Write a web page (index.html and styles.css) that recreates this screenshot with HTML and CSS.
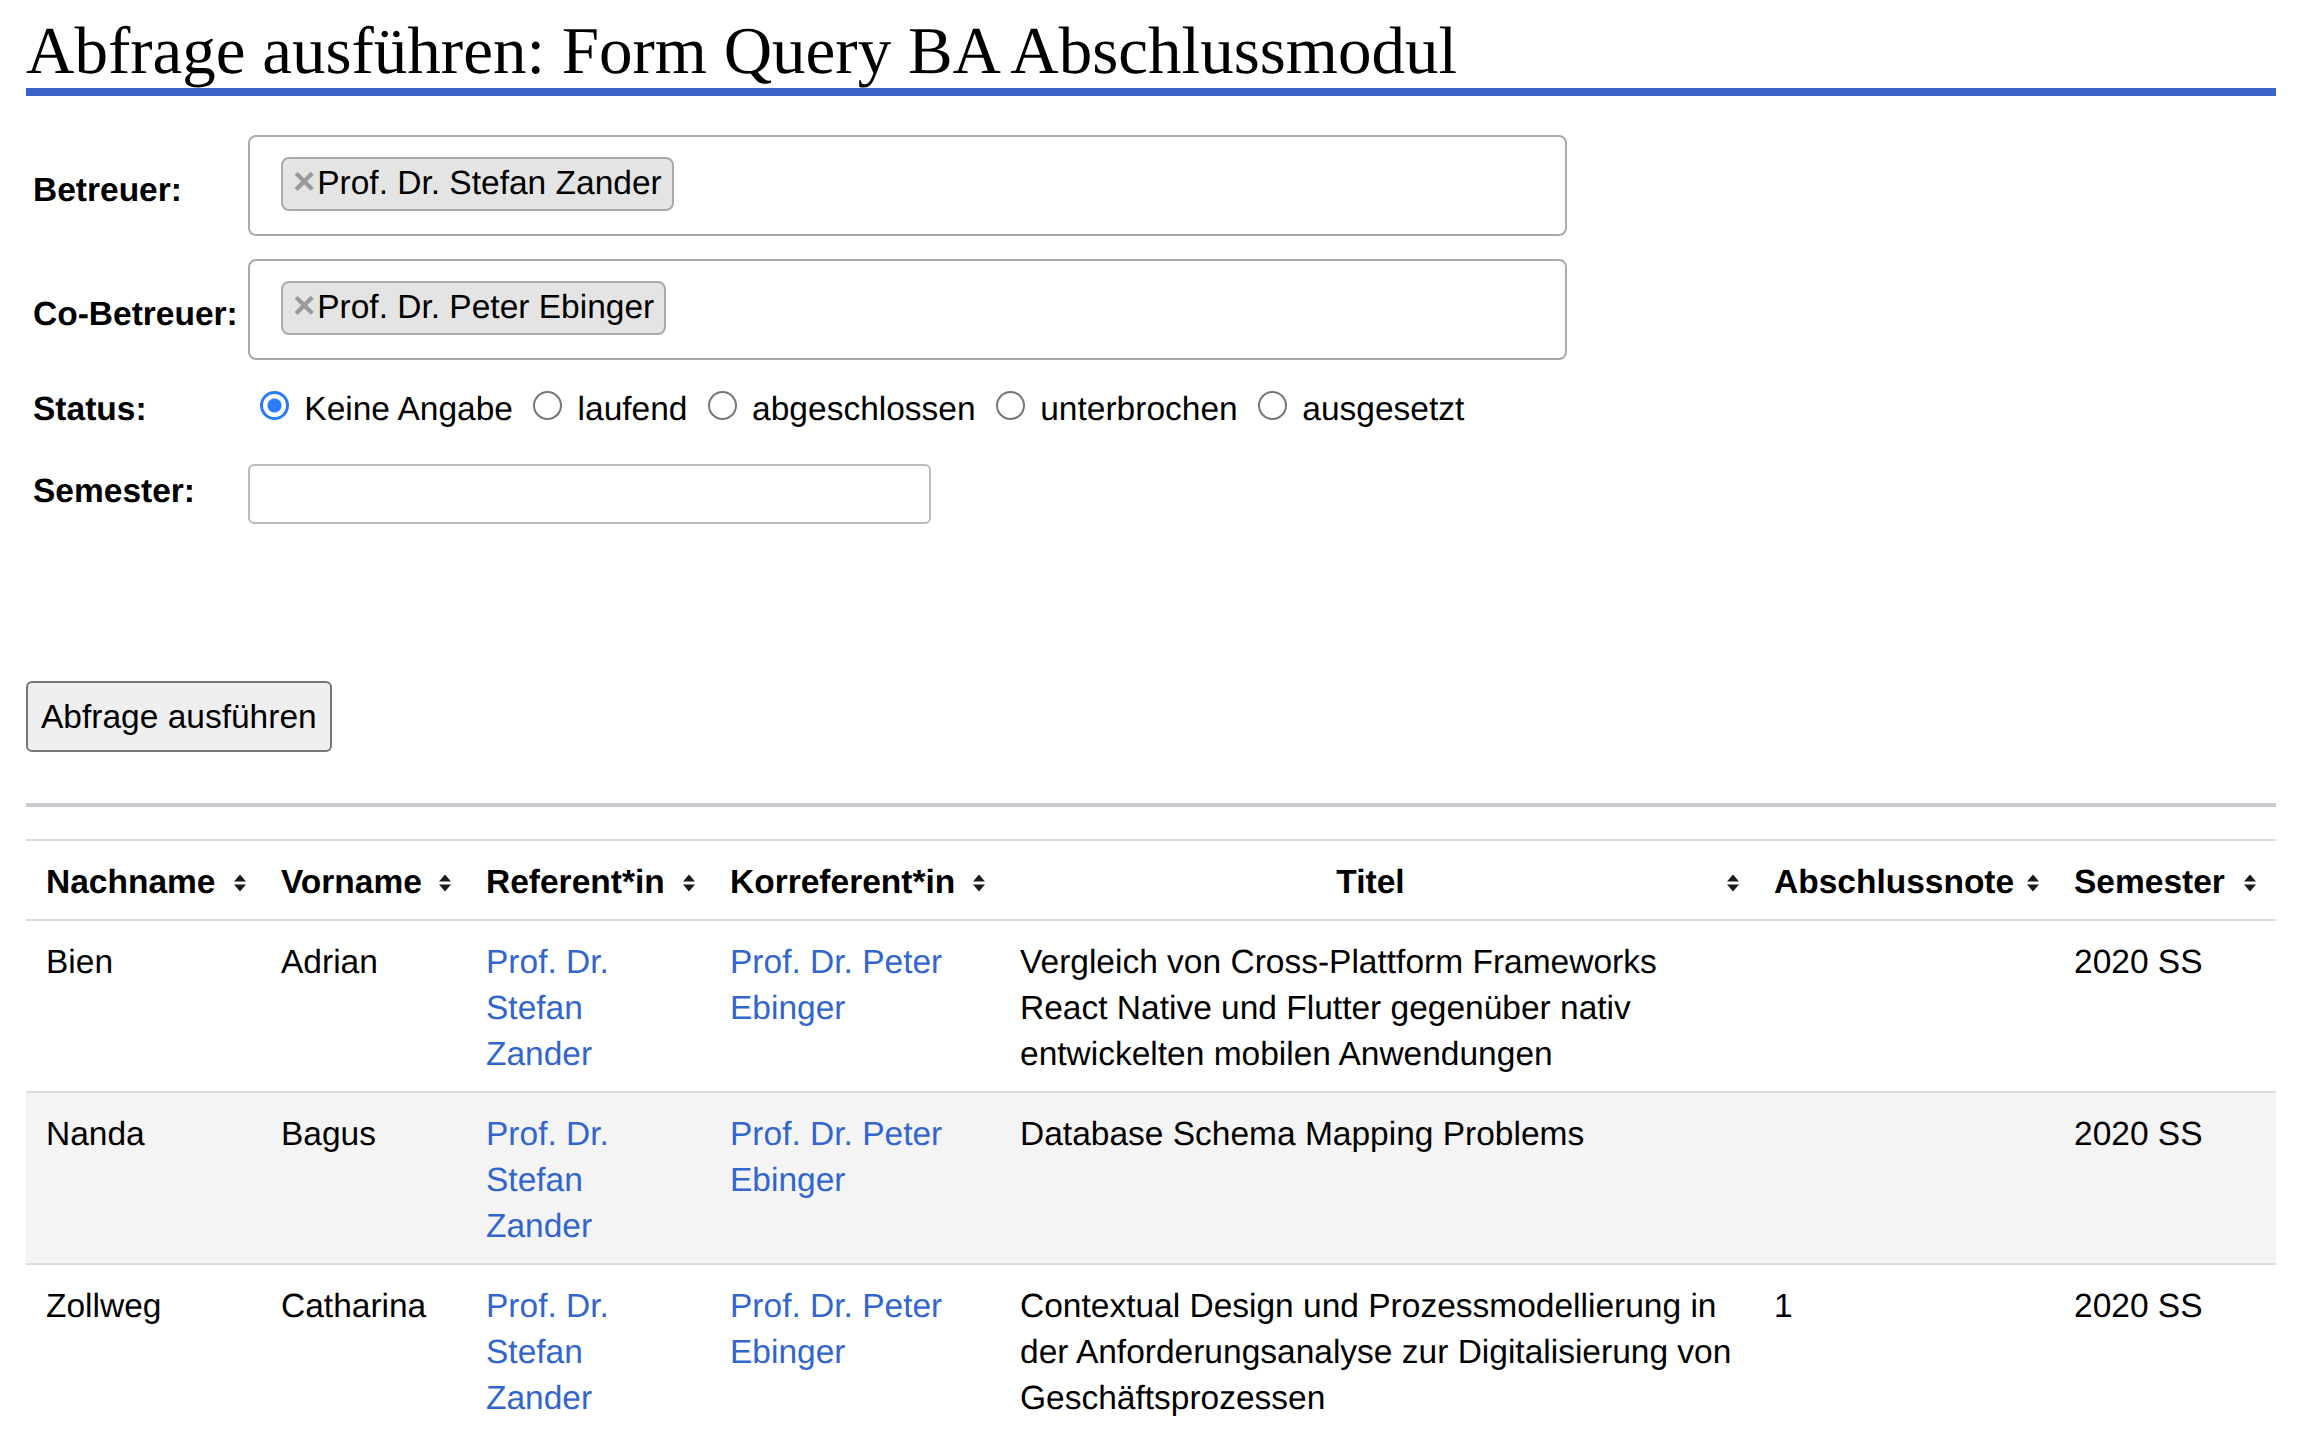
FILE: index.html
```html
<!DOCTYPE html>
<html lang="de">
<head>
<meta charset="utf-8">
<title>Abfrage ausführen: Form Query BA Abschlussmodul</title>
<link rel="stylesheet" href="styles.css">
</head>
<body>
<div class="page">
  <h1 class="page-title">Abfrage ausführen: Form Query BA Abschlussmodul</h1>

  <form class="query-form">
    <div class="form-row select-row">
      <span class="form-label">Betreuer:</span>
      <div class="select-box"><span class="chip"><span class="chip-remove">×</span>Prof. Dr. Stefan Zander</span></div>
    </div>
    <div class="form-row select-row row-gap">
      <span class="form-label">Co-Betreuer:</span>
      <div class="select-box"><span class="chip"><span class="chip-remove">×</span>Prof. Dr. Peter Ebinger</span></div>
    </div>
    <div class="form-row status-row">
      <span class="form-label">Status:</span>
      <div class="radio-group"><input class="radio first" type="radio" name="status" id="s0" checked> <label for="s0">Keine Angabe</label> <input class="radio" type="radio" name="status" id="s1"> <label for="s1">laufend</label> <input class="radio" type="radio" name="status" id="s2"> <label for="s2">abgeschlossen</label> <input class="radio" type="radio" name="status" id="s3"> <label for="s3">unterbrochen</label> <input class="radio" type="radio" name="status" id="s4"> <label for="s4">ausgesetzt</label></div>
    </div>
    <div class="form-row semester-row">
      <label class="form-label" for="sem">Semester:</label>
      <input class="text-input" type="text" id="sem">
    </div>
    <div class="button-row">
      <button type="button" class="run-button">Abfrage ausführen</button>
    </div>
  </form>

  <hr class="separator">

  <table class="results">
    <colgroup>
      <col class="c-nach"><col class="c-vor"><col class="c-ref"><col class="c-kor"><col class="c-titel"><col class="c-note"><col class="c-sem">
    </colgroup>
    <thead>
      <tr>
        <th><div class="th-inner"><span class="th-label">Nachname</span><svg class="sort-icon" viewBox="0 0 12 20"><path d="M0 8.5 L6 1.5 L12 8.5 Z M0 11.5 L12 11.5 L6 18.5 Z"/></svg></div></th>
        <th><div class="th-inner"><span class="th-label">Vorname</span><svg class="sort-icon" viewBox="0 0 12 20"><path d="M0 8.5 L6 1.5 L12 8.5 Z M0 11.5 L12 11.5 L6 18.5 Z"/></svg></div></th>
        <th><div class="th-inner"><span class="th-label">Referent*in</span><svg class="sort-icon" viewBox="0 0 12 20"><path d="M0 8.5 L6 1.5 L12 8.5 Z M0 11.5 L12 11.5 L6 18.5 Z"/></svg></div></th>
        <th><div class="th-inner"><span class="th-label">Korreferent*in</span><svg class="sort-icon" viewBox="0 0 12 20"><path d="M0 8.5 L6 1.5 L12 8.5 Z M0 11.5 L12 11.5 L6 18.5 Z"/></svg></div></th>
        <th><div class="th-inner"><span class="th-label centered">Titel</span><svg class="sort-icon" viewBox="0 0 12 20"><path d="M0 8.5 L6 1.5 L12 8.5 Z M0 11.5 L12 11.5 L6 18.5 Z"/></svg></div></th>
        <th><div class="th-inner"><span class="th-label">Abschlussnote</span><svg class="sort-icon" viewBox="0 0 12 20"><path d="M0 8.5 L6 1.5 L12 8.5 Z M0 11.5 L12 11.5 L6 18.5 Z"/></svg></div></th>
        <th class="last"><div class="th-inner"><span class="th-label">Semester</span><svg class="sort-icon" viewBox="0 0 12 20"><path d="M0 8.5 L6 1.5 L12 8.5 Z M0 11.5 L12 11.5 L6 18.5 Z"/></svg></div></th>
      </tr>
    </thead>
    <tbody>
      <tr>
        <td>Bien</td>
        <td>Adrian</td>
        <td><a href="#">Prof. Dr. Stefan Zander</a></td>
        <td><a href="#">Prof. Dr. Peter Ebinger</a></td>
        <td class="titel">Vergleich von Cross-Plattform Frameworks React Native und Flutter gegenüber nativ entwickelten mobilen Anwendungen</td>
        <td></td>
        <td>2020 SS</td>
      </tr>
      <tr class="alt">
        <td>Nanda</td>
        <td>Bagus</td>
        <td><a href="#">Prof. Dr. Stefan Zander</a></td>
        <td><a href="#">Prof. Dr. Peter Ebinger</a></td>
        <td class="titel">Database Schema Mapping Problems</td>
        <td></td>
        <td>2020 SS</td>
      </tr>
      <tr>
        <td>Zollweg</td>
        <td>Catharina</td>
        <td><a href="#">Prof. Dr. Stefan Zander</a></td>
        <td><a href="#">Prof. Dr. Peter Ebinger</a></td>
        <td class="titel">Contextual Design und Prozessmodellierung in der Anforderungsanalyse zur Digitalisierung von Geschäftsprozessen</td>
        <td>1</td>
        <td>2020 SS</td>
      </tr>
    </tbody>
  </table>
</div>
</body>
</html>
```

FILE: styles.css
```css
html, body {
  margin: 0;
  padding: 0;
  background: #fff;
}

body {
  font-family: "Liberation Sans", Arial, Helvetica, sans-serif;
  font-size: 33.5px;
  color: #000;
  text-rendering: geometricPrecision;
}

.page {
  padding: 0 28px 0 26px;
}

.page-title {
  font-family: "Liberation Serif", "Times New Roman", serif;
  font-size: 67px;
  font-weight: normal;
  line-height: 74px;
  margin: 0;
  padding: 14px 0 0 0;
  border-bottom: 8px solid #3a65c7;
}

/* ---------- form ---------- */
.query-form {
  margin-top: 39px;
}

.form-row {
  display: flex;
  align-items: baseline;
}

.select-row {
  align-items: flex-start;
}

.select-row .form-label {
  padding-top: 37px;
}

.row-gap {
  margin-top: 23px;
}

.form-label {
  box-sizing: border-box;
  width: 222px;
  flex: none;
  padding-left: 7px;
  font-weight: bold;
}

.select-box {
  box-sizing: border-box;
  width: 1319px;
  height: 101px;
  border: 2px solid #aaa;
  border-radius: 8px;
  padding: 20px 0 0 31px;
  background: #fff;
}

.chip {
  display: inline-block;
  box-sizing: border-box;
  height: 54px;
  padding: 6px 10px 0 10px;
  line-height: 37px;
  border: 2px solid #aaa;
  border-radius: 8px;
  background: #e4e4e4;
  white-space: nowrap;
  vertical-align: top;
}

.chip-remove {
  color: #999;
  font-weight: bold;
  font-size: 38px;
  line-height: 30px;
  margin-right: 2px;
}

.status-row {
  margin-top: 31px;
}

.radio-group {
  white-space: nowrap;
}

.radio {
  appearance: none;
  -webkit-appearance: none;
  box-sizing: border-box;
  display: inline-block;
  width: 29px;
  height: 29px;
  margin: 0 6px 0 11px;
  border: 2px solid #767676;
  border-radius: 50%;
  background: #fff;
  vertical-align: baseline;
}

.radio.first {
  margin-left: 12px;
}

.radio:checked {
  border: 3px solid #2a7bf5;
  background: radial-gradient(circle, #2a7bf5 0, #2a7bf5 6.5px, #fff 7.5px, #fff 100%);
}

.semester-row {
  margin-top: 35px;
  align-items: flex-start;
}

.semester-row .form-label {
  padding-top: 9px;
}

.text-input {
  box-sizing: border-box;
  width: 683px;
  height: 60px;
  border: 2px solid #bbb;
  border-radius: 6px;
  font: inherit;
  padding: 0 10px;
  margin: 0;
  background: #fff;
}

.button-row {
  margin-top: 157px;
}

.run-button {
  box-sizing: border-box;
  height: 71px;
  padding: 0 13px;
  margin: 0;
  font: inherit;
  color: #000;
  background: #efefef;
  border: 2px solid #767676;
  border-radius: 6px;
}

.separator {
  border: none;
  height: 4px;
  background: #c8ccd1;
  margin: 51px 0 32px 0;
}

/* ---------- results table ---------- */
.results {
  width: 2250px;
  table-layout: fixed;
  border-collapse: collapse;
}

.c-nach { width: 235px; }
.c-vor { width: 205px; }
.c-ref { width: 244px; }
.c-kor { width: 290px; }
.c-titel { width: 754px; }
.c-note { width: 300px; }
.c-sem { width: 222px; }

.results th,
.results td {
  padding: 19px 20px 13px 20px;
  line-height: 46px;
  border-top: 2px solid #ddd;
  text-align: left;
  vertical-align: top;
}

.results td.titel {
  padding-right: 12px;
}

.results th {
  font-weight: bold;
  border-bottom: 2px solid #ddd;
  padding-right: 15px;
}

.results th.last {
  padding-right: 20px;
}

.th-inner {
  display: flex;
  align-items: center;
  gap: 6px;
}

.th-label {
  flex: 1;
  white-space: nowrap;
}

.th-label.centered {
  text-align: center;
}

.sort-icon {
  flex: none;
  width: 12px;
  height: 20px;
  fill: #1a1a1a;
}

.results tr.alt td {
  background: #f4f4f4;
}

.results a {
  color: #3366cc;
  text-decoration: none;
}
```
